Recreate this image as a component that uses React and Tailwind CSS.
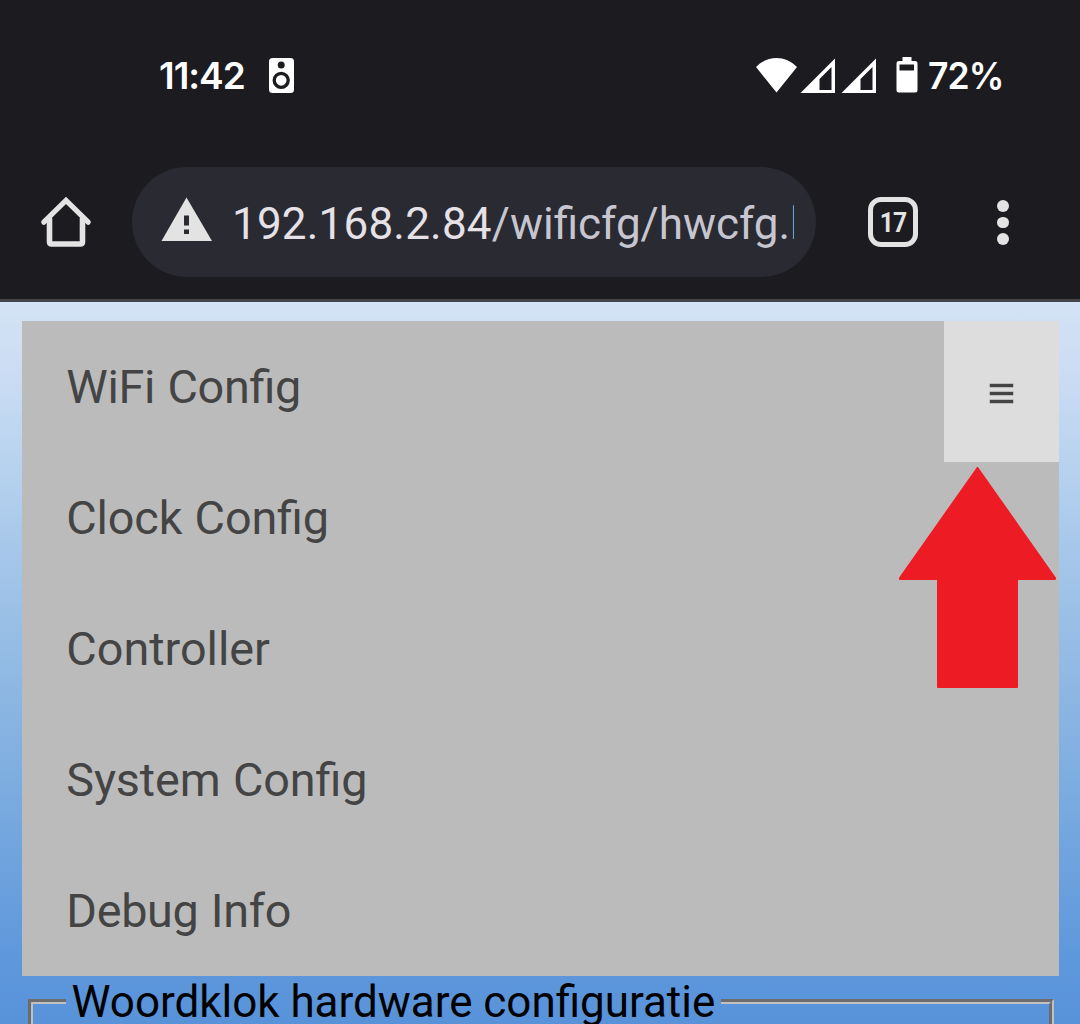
const items = [
  { label: "WiFi Config", spacing: "tracking-[-0.3px]" },
  { label: "Clock Config", spacing: "tracking-[-0.15px]" },
  { label: "Controller", spacing: "tracking-[0px]" },
  { label: "System Config", spacing: "tracking-[-0.15px]" },
  { label: "Debug Info", spacing: "tracking-[-0.3px]" },
];

function Signal({ className }) {
  return (
    <svg className={className} width="36" height="36" viewBox="0 0 36 36" fill="#fff">
      <path fillRule="evenodd" d="M0.5 35 L35 0.5 V35 Z M19.5 32 H31.5 V9 L19.5 21 Z" />
    </svg>
  );
}

function StatusBar() {
  return (
    <div className="flex h-[148px] pt-[57px] pl-[159px] text-white">
      <div className="w-[109px] whitespace-nowrap text-[37px] leading-[38px] font-semibold tracking-[-1px] font-[Inter,sans-serif]">11:42</div>
      <svg className="mt-[1px]" width="26" height="36" viewBox="0 0 26 36">
        <rect x="1" y="0" width="25" height="35" rx="3.5" fill="#fff" />
        <circle cx="13.2" cy="7" r="3.5" fill="#1c1b1f" />
        <circle cx="13.2" cy="22.3" r="7" fill="#fff" stroke="#1c1b1f" strokeWidth="3.3" />
      </svg>
      <svg className="ml-[461px]" width="43" height="36" viewBox="0 0 43 36" fill="#fff">
        <path d="M1 10 C13 -2 30 -2 42 10 L21.5 35.5 Z" />
      </svg>
      <Signal className="ml-[2px] mt-[1px]" />
      <Signal className="ml-[5px] mt-[1px]" />
      <svg className="ml-[19px]" width="22" height="36" viewBox="0 0 22 36" fill="#fff">
        <path fillRule="evenodd" d="M6.500 0 H15.500 V4 H19 Q21.500 4 21.500 6.500 V33 Q21.500 35.500 19 35.500 H3 Q0.500 35.500 0.500 33 V6.500 Q0.500 4 3 4 H6.500 Z M3.500 7.500 V13.500 H18 V7.500 Z" />
      </svg>
      <div className="ml-[10px] origin-left scale-x-[0.960] whitespace-nowrap text-[37px] leading-[38px] font-semibold tracking-[-1px] font-[Inter,sans-serif]">72%</div>
    </div>
  );
}

function Toolbar() {
  return (
    <div className="flex h-[151px] pt-[19px]">
      <svg className="ml-[40px] mt-[29px]" width="52" height="52" viewBox="0 0 52 52" fill="none" stroke="#e3e3e3" strokeLinejoin="round" strokeLinecap="round">
        <path strokeWidth="5.200" d="M3.800 26.200 L26 4.500 L48.200 26.200" strokeLinejoin="miter" />
        <path strokeWidth="5.600" d="M9.500 23 V45.800 Q9.500 48 11.700 48 H40.300 Q42.500 48 42.500 45.800 V23" />
      </svg>
      <div className="ml-[40px] flex h-[110px] w-[684px] rounded-full bg-[#292a32]">
        <svg className="ml-[29px] mt-[30px]" width="51" height="45" viewBox="0 0 51 45">
          <path fill="#e3e3e3" d="M25.500 0.500 L51 44 H0.500 Z" />
          <path fill="#292a32" d="M23 18.500 H28 V28.500 H23 Z M23 32.500 H28 V37 H23 Z" />
        </svg>
        <div className="ml-[20px] mt-[30px] h-[54px] w-[562px] overflow-hidden whitespace-nowrap text-[44px] leading-[54px] text-[#c7c5d0] font-[Roboto,sans-serif] [font-feature-settings:'liga']">
          <span className="tracking-[0.2px] text-[#e5e1e6]">192.168.2.84</span>/wificfg/hwcfg.h
        </div>
      </div>
      <div className="ml-[52px] mt-[30px] flex h-[50px] w-[50px] items-center justify-center rounded-[13px] border-[5.500px] border-[#e3e3e3] text-[28px] leading-none font-bold text-[#e3e3e3] font-[Roboto,sans-serif]">
        <span className="mt-[1px] scale-x-[0.880] tracking-[-1px]">17</span>
      </div>
      <div className="ml-[79px] mt-[33px] flex flex-col gap-[5px]">
        <i className="size-[11.500px] rounded-full bg-[#e3e3e3]" />
        <i className="size-[11.500px] rounded-full bg-[#e3e3e3]" />
        <i className="size-[11.500px] rounded-full bg-[#e3e3e3]" />
      </div>
    </div>
  );
}

export default function App() {
  return (
    <div className="h-[1024px] w-[1080px] overflow-hidden bg-[#1c1b1f]">
      <StatusBar />
      <Toolbar />
      <div className="h-[725px] border-t-[3px] border-[#46464a] bg-[linear-gradient(180deg,#d4e3f5_0px,#cadcf3_75px,#bad4ef_150px,#a6c7ea_250px,#8bb6e2_400px,#6fa3de_560px,#5f98dc_650px,#5892d9_722px)] pl-[22px] pt-[19px]">
        <nav className="relative h-[655px] w-[1037px] bg-[#bbb]">
          {items.map(({ label, spacing }) => (
            <a key={label} className={`block h-[131px] pl-[44.300px] pt-[39px] text-[46.750px] leading-[55px] text-[#444] font-[Roboto,sans-serif] [font-feature-settings:'liga'] [word-spacing:1px] ${spacing}`}>{label}</a>
          ))}
          <button className="absolute top-0 right-0 flex h-[141px] w-[115px] flex-col items-center gap-[5px] bg-[#ddd] pt-[63px]" aria-label="Menu">
            <i className="block h-[3px] w-[23px] bg-[#444] shadow-[0_0_0_0.5px_#999]" />
            <i className="block h-[3px] w-[23px] bg-[#444] shadow-[0_0_0_0.5px_#999]" />
            <i className="block h-[3px] w-[23px] bg-[#444] shadow-[0_0_0_0.5px_#999]" />
          </button>
          <svg className="absolute left-[877px] top-[146px]" width="158" height="222" viewBox="0 0 158 222">
            <path fill="#ed1c24" stroke="#ed1c24" strokeWidth="2" strokeLinejoin="round" d="M78.500 1 L156 111 V112 H118 V220 H39 V112 H1 V111 Z" />
          </svg>
        </nav>
        <fieldset className="ml-[6px] h-[120px] w-[1026px] border-[5px] border-[#c0c0c0] pl-[33px] [border-style:groove]">
          <legend className="px-[5.500px] pt-[2px] text-[44px] leading-[49px] tracking-[-0.03px] text-black font-[Roboto,sans-serif] [font-feature-settings:'liga']">Woordklok hardware configuratie</legend>
        </fieldset>
      </div>
    </div>
  );
}
